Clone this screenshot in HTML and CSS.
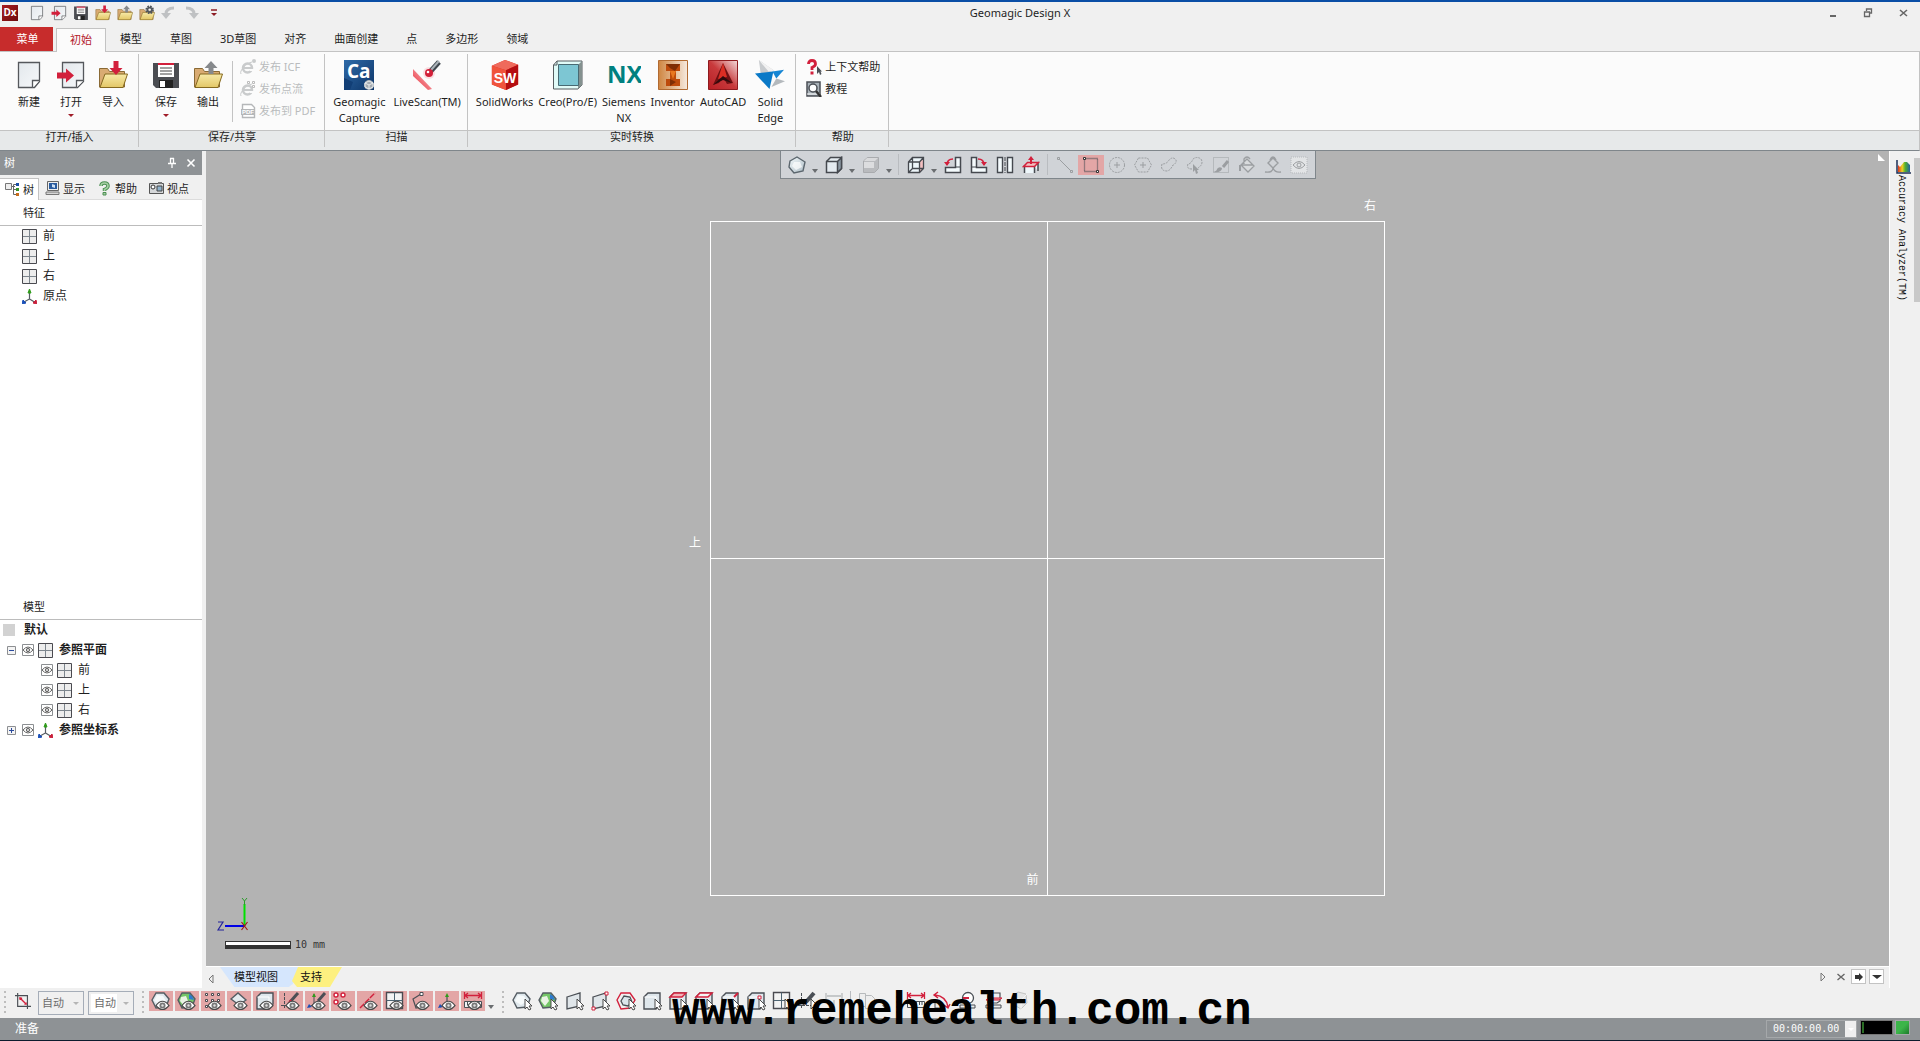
FILE: index.html
```html
<!DOCTYPE html>
<html lang="zh-CN">
<head>
<meta charset="utf-8">
<title>Geomagic Design X</title>
<link rel="stylesheet" href="styles.css">
</head>
<body>
<svg class="sprite" aria-hidden="true">
  <defs>
    <linearGradient id="paper" x1="0" y1="0" x2="1" y2="1"><stop offset="0" stop-color="#e3e8ec"/><stop offset="1" stop-color="#f6f8fa"/></linearGradient>
    <linearGradient id="gold" x1="0" y1="0" x2="0" y2="1"><stop offset="0" stop-color="#f7eaa8"/><stop offset="1" stop-color="#e3c766"/></linearGradient>
    <linearGradient id="steel" x1="0" y1="0" x2="1" y2="1"><stop offset="0" stop-color="#f4fafc"/><stop offset="1" stop-color="#aebdc6"/></linearGradient>
    <linearGradient id="navy" x1="0" y1="0" x2="1" y2="1"><stop offset="0" stop-color="#2e6aa8"/><stop offset="1" stop-color="#0d3568"/></linearGradient>
    <linearGradient id="orange" x1="0" y1="0" x2="1" y2="0"><stop offset="0" stop-color="#cf8540"/><stop offset="1" stop-color="#f6eadf"/></linearGradient>
    <linearGradient id="ruby" x1="1" y1="0" x2="0" y2="1"><stop offset="0" stop-color="#f3dada"/><stop offset=".5" stop-color="#c83a3c"/><stop offset="1" stop-color="#b81f25"/></linearGradient>
    <linearGradient id="rainbow" x1="0" y1="0" x2="1" y2="0"><stop offset="0" stop-color="#e03020"/><stop offset=".35" stop-color="#f0d020"/><stop offset=".6" stop-color="#50b030"/><stop offset="1" stop-color="#2060a0"/></linearGradient>
    <linearGradient id="beam" x1="0" y1="1" x2="1" y2="0"><stop offset="0" stop-color="#e8202c"/><stop offset="1" stop-color="#fbd6da"/></linearGradient>
  </defs>
  <symbol id="page" viewBox="0 0 30 30"><path d="M4.500 2.500h21v19l-5 6h-16z" fill="url(#paper)" stroke="#55585c" stroke-width="1.300"/><path d="M25.500 20.500h-7l0 7" fill="#fff" stroke="#55585c" stroke-width="1.300"/></symbol>
  <symbol id="open" viewBox="0 0 30 30"><path d="M6.500 2.500h21v19l-6 6h-15z" fill="url(#paper)" stroke="#55585c" stroke-width="1.300"/><path d="M27.500 20.500h-7v7" fill="#fff" stroke="#55585c" stroke-width="1.300"/><path d="M1 12.500h9V8.500l8 7-8 7v-4H1z" fill="#d2203c"/></symbol>
  <symbol id="folder" viewBox="0 0 30 30"><path d="M1.500 27V8.500h8l2 3h15V27z" fill="#d9ab72" stroke="#8a6a35"/><path d="M7 14h22.500L25 27.500H2z" fill="url(#gold)" stroke="#85691f"/></symbol>
  <symbol id="import" viewBox="0 0 30 30"><use href="#folder"/><path d="M15.500 1h5v7h4l-6.500 7L11.500 8h4z" fill="#d2203c"/></symbol>
  <symbol id="export" viewBox="0 0 30 30"><use href="#folder"/><path d="M15.500 14V8h-4L18 1l6.500 7h-4v6z" fill="#86898c"/></symbol>
  <symbol id="gearfolder" viewBox="0 0 30 30"><use href="#folder"/><circle cx="20" cy="9" r="6" fill="none" stroke="#50565c" stroke-width="4" stroke-dasharray="3 1.700"/><circle cx="20" cy="9" r="4" fill="none" stroke="#50565c" stroke-width="3"/></symbol>
  <symbol id="disk" viewBox="0 0 30 30"><path d="M2 3h26v25H5l-3-3z" fill="#4b4d52"/><path d="M7 4h16v13H7z" fill="#fff"/><path d="M7 3h16v2H7z" fill="#d2203c"/><path d="M9 8h12M9 11h12M9 14h12" stroke="#444"/><path d="M8 20h14v8H8z" fill="#222"/><path d="M9 21h5v6H9z" fill="#fff"/></symbol>
  <symbol id="undo" viewBox="0 0 16 16"><path d="M0 8h10l-5 6z" fill="#bfc1c3"/><path d="M5 9q0-6 8-6" fill="none" stroke="#bfc1c3" stroke-width="3"/></symbol>
  <symbol id="redo" viewBox="0 0 16 16"><path d="M16 8H6l5 6z" fill="#bfc1c3"/><path d="M11 9q0-6-8-6" fill="none" stroke="#bfc1c3" stroke-width="3"/></symbol>
  <symbol id="ie" viewBox="0 0 16 16"><circle cx="7.500" cy="9" r="4.500" fill="none" stroke="#c9cbcc" stroke-width="2.500"/><path d="M4 9h8" stroke="#c9cbcc" stroke-width="2"/><path d="M10 10h4v2h-4z" fill="#fbfbfb"/><path d="M1 15C-1 12 6 4 12 3" fill="none" stroke="#c9cbcc"/></symbol>
  <symbol id="icf" viewBox="0 0 16 16"><use href="#ie"/><circle cx="14" cy="2" r="2" fill="#c9cbcc"/></symbol>
  <symbol id="cloud" viewBox="0 0 16 16"><use href="#ie"/><path d="M7.500.500h2v2h-2zM12.500.500h2v2h-2zM12.500 4.500h2v2h-2z" fill="#fff" stroke="#bbb"/></symbol>
  <symbol id="livescan" viewBox="0 0 30 30"><path d="M1 9l19 20-4 1L1 16z" fill="url(#beam)"/><circle cx="17" cy="13" r="6" fill="#fad0d6" opacity=".7"/><path d="M17 13L27 2" stroke="#3f474e" stroke-width="5"/><path d="M19 10l8-9" stroke="#aab2b8" stroke-width="2"/><circle cx="17" cy="13" r="4" fill="#d21f38"/><circle cx="16" cy="12" r="1.300" fill="#fff"/></symbol>
  <symbol id="creo" viewBox="0 0 30 30"><path d="M.500 5L4 1h25v24l-4 4H.500z" fill="#e1fbf8" stroke="#565d60"/><path d="M25 5l4-4v24l-4 4z" fill="#84918f"/><path d="M5.500 4.500h20v21h-20z" fill="#7dc6d3" stroke="#486a73"/><path d="M.500 5H4M4 1v4" stroke="#565d60"/></symbol>
  <symbol id="inventor" viewBox="0 0 30 30"><path d="M.500.500h29v29H.500z" fill="url(#orange)" stroke="#b16a31"/><path d="M8 4h14v7h-4v8h4v7H8v-7h4v-8H8z" fill="#bd4a0b"/><path d="M8 4h14l-5 7-5-3zM12 19l6 3-6 4z" fill="#7f2e04"/><path d="M12 11h6l-3 8z" fill="#e87720"/></symbol>
  <symbol id="acad" viewBox="0 0 30 30"><path d="M.500.500h29v29H.500z" fill="url(#ruby)" stroke="#8e1a1e"/><path d="M15 3l10 20-6 1-4-7-4 6-6 2z" fill="#701013"/><path d="M15 3l4 14-9 2z" fill="#db2e24"/><path d="M5 25l10-9 9 7-9-3z" fill="#2f0b0d"/></symbol>
  <symbol id="edge" viewBox="0 0 31 31"><path d="M4 0l16 11-14 4z" fill="#c8cbce"/><path d="M4 0l16 11-6 1z" fill="#f2f2f2"/><path d="M0 14l19-2-4 18z" fill="#0a79c7"/><path d="M18 12l12-2-8 9z" fill="#1686d4"/><path d="M17 28l5-9 9 3z" fill="#b4b9bd"/></symbol>
  <symbol id="ctxhelp" viewBox="0 0 16 16"><path d="M2.500 5q0-3.500 3.500-3.500T9.500 5Q9.500 7 6 8.500V11" fill="none" stroke="#d2203c" stroke-width="2.800"/><path d="M4.500 12.500h3v3h-3z" fill="#d2203c"/><path d="M11 7v8l2-2 1 3 1.500-1-1-2.500H16z" fill="#4b4f55"/></symbol>
  <symbol id="tutorial" viewBox="0 0 16 16"><path d="M1 1h13v14H1z" fill="#aab3ba" stroke="#4b4f55" stroke-width="1.500"/><path d="M1 13h13" stroke="#fff"/><circle cx="7" cy="7" r="4" fill="#fff" stroke="#4b4f55" stroke-width="1.500"/><path d="M10 10l5 6" stroke="#333" stroke-width="2.500"/></symbol>

  <symbol id="poly" viewBox="0 0 18 18"><path d="M2 5l7-4 8 5-2 9-9 2-5-6z" fill="url(#steel)" stroke="#5b666e" stroke-width="1.400"/><path d="M6 6l6 0 2 5-6 3-4-4z" fill="#fff" opacity=".7"/></symbol>
  <symbol id="cube" viewBox="0 0 18 18"><path d="M1.500 5.500l4-4h11v11l-4 4h-11z" fill="#e4ebf0" stroke="#45494f" stroke-width="1.500"/><path d="M12.500 5.500l4-4v11l-4 4z" fill="#8b98a2" stroke="#45494f" stroke-width="1.500"/><path d="M1.500 5.500h11" stroke="#45494f" stroke-width="1.500"/></symbol>
  <symbol id="cubegray" viewBox="0 0 18 18"><path d="M1.500 5l4-3.500h11v11l-4 4h-11z" fill="#b9bbbe" stroke="#a9abae"/><path d="M2 6h10v6H2z" fill="#dcdddf"/><path d="M5 2h11l-3 3H2z" fill="#d9dadc"/></symbol>
  <symbol id="wirecube" viewBox="0 0 18 18"><path d="M1.500 6l4-4.500h11v11l-4 4h-11z" fill="#edf6fa"/><path d="M12.500 6l4-4.500v11l-4 4z" fill="#f3bfc0"/><path d="M1.500 6l4-4.500h11v11l-4 4h-11zM1.500 6h11v10.500M12.500 6l4-4.500M5.500 1.500v11h11M1.500 16.500l4-4" fill="none" stroke="#45494f" stroke-width="1.300"/></symbol>
  <symbol id="rotl" viewBox="0 0 18 18"><path d="M11.500 1.500h5v15h-15v-5h10z" fill="#f4fbfd" stroke="#45494f" stroke-width="1.500"/><path d="M11 11h5" stroke="#45494f"/><path d="M3 9q0-6 6-6" fill="none" stroke="#d2203c" stroke-width="1.600"/><path d="M0 6h6l-3 4z" fill="#d2203c"/></symbol>
  <symbol id="rotr" viewBox="0 0 18 18"><path d="M1.500 1.500h5v10h10v5h-15z" fill="#f4fbfd" stroke="#45494f" stroke-width="1.500"/><path d="M2 11h5" stroke="#45494f"/><path d="M8 3q6 0 6 6" fill="none" stroke="#d2203c" stroke-width="1.600"/><path d="M11 6h6l-3 4z" fill="#d2203c"/></symbol>
  <symbol id="mirror" viewBox="0 0 18 18"><path d="M1.500 1.500h5v15h-5zM11.500 1.500h5v15h-5z" fill="#f4fbfd" stroke="#45494f" stroke-width="1.400"/><path d="M9 1v16" stroke="#45494f" stroke-dasharray="4 1"/></symbol>
  <symbol id="extrude" viewBox="0 0 18 18"><path d="M2.500 17v-7h10v7M12 10l4-3v8" fill="#edf6fa" stroke="#45494f" stroke-width="1.500"/><path d="M1.500 10.500l4-4h11l-4 4z" fill="#f3bfc0" stroke="#d2203c" stroke-width="1.500"/><path d="M9 8V2" stroke="#d2203c" stroke-width="2"/><path d="M6 4l3-4 3 4z" fill="#d2203c"/></symbol>
  <symbol id="dline" viewBox="0 0 18 18"><path d="M3 3l12 12" stroke="#9b9ea1"/><path d="M1.500 1.500h2v2h-2zM14.500 14.500h2v2h-2z" fill="none" stroke="#9b9ea1"/></symbol>
  <symbol id="drect" viewBox="0 0 18 18"><path d="M2.500 2.500h13v13h-13z" fill="none" stroke="#454a50" stroke-width="1.300" stroke-dasharray="1 1"/><path d="M1.500 1.500h2v2h-2zM14.500 14.500h2v2h-2z" fill="#fff" stroke="#333"/></symbol>
  <symbol id="dcircle" viewBox="0 0 18 18"><circle cx="9" cy="9" r="7.500" fill="none" stroke="#9b9ea1" stroke-dasharray="2 1"/><path d="M9 6v6M6 9h6" stroke="#9b9ea1"/></symbol>
  <symbol id="dhex" viewBox="0 0 18 18"><path d="M4.500 2h9l4 7-4 7h-9l-4-7z" fill="none" stroke="#9b9ea1" stroke-dasharray="2 1"/><path d="M9 6v6M6 9h6" stroke="#9b9ea1"/></symbol>
  <symbol id="dfree" viewBox="0 0 18 18"><path d="M2 8q-2 7 5 7 4-1 5-5 5-3 4-6-3-4-7 0-2 4-7 4z" fill="none" stroke="#9b9ea1" stroke-dasharray="2 1"/></symbol>
  <symbol id="dpick" viewBox="0 0 18 18"><path d="M6 13q-6 0-4-5 3 0 5-5 4-3 8 0 3 5-3 9" fill="none" stroke="#9b9ea1" stroke-dasharray="2 1"/><path d="M7 8v8l2-2 1 4 2-1-1-3h2z" fill="#9b9ea1"/></symbol>
  <symbol id="dbrush" viewBox="0 0 18 18"><path d="M1.500 1.500h15v15h-15z" fill="none" stroke="#9b9ea1" stroke-dasharray="1 1"/><path d="M16 5l-5 6" stroke="#9b9ea1" stroke-width="3"/><path d="M1 16q4-1 4-3 2-3 5-1 0 5-9 4z" fill="#9b9ea1"/></symbol>
  <symbol id="dbucket" viewBox="0 0 18 18"><path d="M3 9l6-6 7 7-6 6zM6 8V3q3-4 6 0M3 9h12" fill="#d9dbdd" stroke="#9b9ea1" stroke-width="1.300"/><path d="M1 9v6h2V9z" fill="#9b9ea1"/></symbol>
  <symbol id="dextend" viewBox="0 0 18 18"><path d="M4 7l5-5 5 5-5 5zM6 4q3-6 6 0M1 16q8 1 8-4 2 5 8 4" fill="none" stroke="#9b9ea1" stroke-width="1.400"/></symbol>
  <symbol id="deye" viewBox="0 0 18 18"><path d="M1 1h16v16H1z" fill="#e2e4e6" stroke="#b6b9bc" stroke-dasharray="1 1"/><path d="M3 9q6-7 12 0-6 7-12 0z" fill="none" stroke="#9b9ea1"/><circle cx="9" cy="9" r="2" fill="none" stroke="#9b9ea1"/></symbol>

  <symbol id="plane" viewBox="0 0 15 15"><path d="M.500.500h14v14H.500z" fill="#ededed" stroke="#4a4a50"/><path d="M7.500 1v13M1 7.500h13" stroke="#7d868e"/></symbol>
  <symbol id="origin" viewBox="0 0 15 15"><path d="M7.500 3v7L2 13M7.500 10l5 3" fill="none" stroke="#555c62" stroke-width="1.200"/><path d="M6 4l1.500-4L9 4z" fill="#309c1c" stroke="#309c1c"/><path d="M0 15l1-4 3 3z" fill="#1b50b8" stroke="#1b50b8"/><path d="M15 15l-1-4-3 3z" fill="#c9203c" stroke="#c9203c"/></symbol>
  <symbol id="eyebox" viewBox="0 0 12 12"><path d="M.500.500h11v11H.500z" fill="#fff" stroke="#8c8f92"/><path d="M1 6q5-6 10 0-5 6-10 0z" fill="#fff" stroke="#666"/><circle cx="6" cy="6" r="1.700" fill="#ccc" stroke="#666"/></symbol>
  <symbol id="treeicon" viewBox="0 0 15 15"><path d="M.500 1.500h6v6h-6z" fill="#eee" stroke="#777"/><path d="M7 4.500h3M11 2.500H8.500v10H11M9 7.500h2" fill="none" stroke="#666"/><path d="M11 1h3v3h-3z" fill="#1d4fa8"/><path d="M11 6h3v3h-3z" fill="#38952a"/><path d="M11 11h3v3h-3z" fill="#c86d1c"/></symbol>
  <symbol id="display" viewBox="0 0 15 15"><path d="M2.500.500h11v9h-11z" fill="#eee" stroke="#666"/><path d="M4 2h8v6H4z" fill="#2a5c9f"/><path d="M7 3l3 1v3l-3-1z" fill="#cfe1f4"/><path d="M1 11h13v2.500H1z" fill="#d7d7d7" stroke="#777"/></symbol>
  <symbol id="help" viewBox="0 0 15 15"><path d="M4 5q0-3 3.500-3T11 5q0 2-3.500 3.500V10" fill="none" stroke="#4b8e52" stroke-width="3.500"/><path d="M4 5q0-3 3.500-3T11 5q0 2-3.500 3.500V10" fill="none" stroke="#a6d0a4" stroke-width="1.600"/><path d="M6 11.500h3v2.500H6z" fill="#a6d0a4" stroke="#4b8e52"/></symbol>
  <symbol id="camera" viewBox="0 0 15 15"><path d="M.500 2.500h14v10H.500z" fill="#d5d7d9" stroke="#555"/><path d="M9 1h4v2H9z" fill="#777"/><circle cx="4" cy="6" r="2" fill="#fff" stroke="#333"/><path d="M8 5h5v5H8z" fill="#8fb2cc" stroke="#444"/></symbol>
  <symbol id="accuracy" viewBox="0 0 15 14"><path d="M2 12V5l2 2 4-5h3l3 3v7z" fill="url(#rainbow)"/><path d="M1 0v13h14" fill="none" stroke="#1b2e54" stroke-width="1.500"/></symbol>

  <symbol id="eye" viewBox="0 0 24 20"><path d="M7 14.500q6.500-8.500 13 0-6.500 8-13 0z" fill="#fff" stroke="#4a4a4a" stroke-width="1.200"/><circle cx="13.500" cy="14.500" r="3" fill="#777"/><circle cx="13.500" cy="14.500" r="1.200" fill="#ddd"/></symbol>
  <symbol id="cursor" viewBox="0 0 24 20"><path d="M15 8v10l2-2 2 3 2-1-2-3h3z" fill="#fff" stroke="#4a4a4a"/></symbol>
  <symbol id="b-poly" viewBox="0 0 24 20"><path d="M3 9l4-7 8 0 5 6-3 8-10 1z" fill="#dfe8ed" stroke="#545c63" stroke-width="1.400"/><path d="M8 4l6 1 3 5-6 4-6-4z" fill="#f6fafb"/></symbol>
  <symbol id="b-region" viewBox="0 0 24 20"><path d="M3 9l4-7 8 0 5 6-3 8-10 1z" fill="#74c667" stroke="#545c63" stroke-width="1.400"/><path d="M6 6l5-1 2 5-4 5-4-5z" fill="#e9f4e4"/><path d="M14 3l3 2 2 4-5-1z" fill="#2c79cf"/></symbol>
  <symbol id="b-points" viewBox="0 0 24 20"><path d="M4.500 2.500h2v2h-2zM10.500 2.500h2v2h-2zM16.500 2.500h2v2h-2zM4.500 8.500h2v2h-2zM10.500 8.500h2v2h-2zM16.500 8.500h2v2h-2zM4.500 14.500h2v2h-2z" fill="#fff" stroke="#4a4a50"/></symbol>
  <symbol id="b-surface" viewBox="0 0 24 20"><path d="M4 8l7-6 8 7-7 5z" fill="#e4ecf0" stroke="#545c63" stroke-width="1.400"/></symbol>
  <symbol id="b-solid" viewBox="0 0 24 20"><path d="M4 6l4-4h12v11l-4 5H4z" fill="#dfe7ec" stroke="#4a4f55" stroke-width="1.400"/><path d="M4.500 6H16v11" fill="none" stroke="#fff"/></symbol>
  <symbol id="b-sketch" viewBox="0 0 24 20"><path d="M5.500 2v16M2 14.500h18" stroke="#4a4f55" stroke-dasharray="3 1"/><path d="M19 2l-8 9" stroke="#4a4f55" stroke-width="3"/><path d="M12 9l-3 4" stroke="#d2203c" stroke-width="2"/></symbol>
  <symbol id="b-pen" viewBox="0 0 24 20"><path d="M5.500 2v16M2 14.500h18" stroke="#4a4f55" stroke-dasharray="3 1"/><path d="M18 2l-8 9" stroke="#4a4f55" stroke-width="4"/><path d="M10 9l-3 5" stroke="#4a4f55"/></symbol>
  <symbol id="b-sketch3" viewBox="0 0 24 20"><path d="M9 3v10l-5 3M9 13h10" fill="none" stroke="#4a4f55"/><path d="M7 6l2-4 2 4z" fill="#309c1c"/><path d="M2 17l2-4 3 3z" fill="#1b50b8"/><path d="M20 2l-7 8" stroke="#4a4f55" stroke-width="3"/></symbol>
  <symbol id="b-pts" viewBox="0 0 24 20"><g fill="#fff" stroke="#d2203c" stroke-width="1.400"><circle cx="5" cy="4" r="2"/><circle cx="12" cy="4" r="2"/><circle cx="5" cy="11" r="2"/></g></symbol>
  <symbol id="b-line" viewBox="0 0 24 20"><path d="M3 17L18 2" stroke="#d2203c" stroke-width="1.400" stroke-dasharray="6 1"/></symbol>
  <symbol id="b-plane" viewBox="0 0 24 20"><path d="M3.500 1.500h16v16h-16z" fill="#f3f3f3" stroke="#4a4a50" stroke-width="1.400"/><path d="M11.500 1.500v16M3.500 9.500h16" stroke="#4e6472"/></symbol>
  <symbol id="b-curve" viewBox="0 0 24 20"><path d="M12 3L4 8l3 9 6-1" fill="none" stroke="#4a4f55" stroke-width="1.200"/><path d="M11 1.500h3v3h-3z" fill="#fff" stroke="#4a4f55"/></symbol>
  <symbol id="b-coord" viewBox="0 0 24 20"><path d="M12 5v9l-7 2M12 13l7 2" fill="none" stroke="#4a4f55" stroke-width="1.200"/><path d="M10 6l2-4 2 4z" fill="#309c1c"/><path d="M3 17l2-4 3 3z" fill="#1b50b8"/></symbol>
  <symbol id="b-dim" viewBox="0 0 24 20"><path d="M3.500 1v7M20.500 1v7M4 4.500h16M7 2L4 4.500 7 7M17 2l3 2.500L17 7" fill="none" stroke="#d2203c" stroke-width="1.300"/><path d="M3.500 10.500h17v6h-17z" fill="#f1f4f6" stroke="#4a4f55"/><path d="M6.500 11v3M9.500 11v3M12.500 11v3M15.500 11v3M18 11v3" stroke="#4a4f55"/></symbol>
  <symbol id="b-quad" viewBox="0 0 24 20"><path d="M5 6l13-4v13L5 18z" fill="#e0e6ea" stroke="#4a4f55" stroke-width="1.300"/></symbol>
  <symbol id="b-quadpt" viewBox="0 0 24 20"><use href="#b-quad"/><path d="M17 1h3v3h-3zM4 16h3v3H4z" fill="#fff" stroke="#d2203c"/></symbol>
  <symbol id="b-polyred" viewBox="0 0 24 20"><path d="M3 9l4-7 9 0 5 7-5 8-9 1z" fill="none" stroke="#d2203c" stroke-width="1.400"/><path d="M7 10l3-5 6 1 2 5-4 4-5-1z" fill="#dce6ec" stroke="#4a4f55" stroke-width="1.300"/></symbol>
  <symbol id="b-face" viewBox="0 0 24 20"><use href="#b-solid"/><path d="M4 6l4-4h12l-4 4z" fill="#f0b4b9" stroke="#d2203c" stroke-width="1.400"/></symbol>
  <symbol id="b-loop" viewBox="0 0 24 20"><use href="#b-solid"/><path d="M4 6l4-4h12l-4 4z" fill="#f5f5f5" stroke="#d2203c" stroke-width="1.500"/></symbol>
  <symbol id="b-edge" viewBox="0 0 24 20"><use href="#b-solid"/><path d="M16 6l4-4" stroke="#d2203c" stroke-width="2"/></symbol>
  <symbol id="b-vertex" viewBox="0 0 24 20"><use href="#b-solid"/><path d="M14 5h3v3h-3z" fill="#fff" stroke="#d2203c"/></symbol>
  <symbol id="b-crop" viewBox="0 0 18 18"><path d="M3 0v15h15M0 3h14v15" fill="none" stroke="#4a4f55" stroke-width="1.300"/><path d="M5 5l8 8" stroke="#d2203c" stroke-width="1.500"/><path d="M5 5h3v3H5zM10 13l3-3v3z" fill="#d2203c"/></symbol>
  <symbol id="b-dimgray" viewBox="0 0 24 20"><path d="M4 2v6M20 2v6M5 5h14M12 9v8" fill="none" stroke="#b7babc" stroke-width="1.300"/></symbol>
  <symbol id="b-copy" viewBox="0 0 24 20"><path d="M4.500 2.500h6v13h-6zM10.500 4.500h6l3 3v10h-9z" fill="#eee" stroke="#b7babc"/></symbol>
  <symbol id="b-angle" viewBox="0 0 24 20"><path d="M5 17V9q8 1 9 8z" fill="#e8ecef" stroke="#4a4f55"/><path d="M5 4q11 1 13 12M8 1L4 4l4 3M14 14l4 3 2-4" fill="none" stroke="#d2203c" stroke-width="1.400"/></symbol>
  <symbol id="b-radius" viewBox="0 0 24 20"><circle cx="12" cy="7" r="5.500" fill="#fff" stroke="#4a4f55" stroke-width="1.300"/><path d="M7 7h6" stroke="#d2203c" stroke-width="2"/><path d="M4 14h15v3H4z" fill="#eee" stroke="#4a4f55"/></symbol>
  <symbol id="b-section" viewBox="0 0 24 20"><path d="M6 5l3-3h9v8l-3 2H6z" fill="#eef2f4" stroke="#4a4f55" stroke-width="1.200"/><path d="M4 9l3-2h13l-3 2z" fill="#f0a0a8" stroke="#d2203c"/><path d="M4 14h15v3H4z" fill="#eee" stroke="#4a4f55"/></symbol>
  <symbol id="b-faded" viewBox="0 0 24 20"><path d="M5 5l5-4 8 2 1 9-6 6-7-4z" fill="#e6e6e6" stroke="#c4c4c4"/><path d="M5 5l8 4 6-6M13 9v9" fill="none" stroke="#f5f5f5"/></symbol>
</svg>

<header class="titlebar">
  <span class="logo">Dx</span>
  <div class="quick">
    <button aria-label="新建"><svg class="i16"><use href="#page"/></svg></button>
    <button aria-label="打开"><svg class="i16"><use href="#open"/></svg></button>
    <button aria-label="保存"><svg class="i16"><use href="#disk"/></svg></button>
    <button aria-label="导入"><svg class="i16"><use href="#import"/></svg></button>
    <button aria-label="输出"><svg class="i16"><use href="#export"/></svg></button>
    <button aria-label="设置"><svg class="i16"><use href="#gearfolder"/></svg></button>
    <button aria-label="撤销"><svg class="i16"><use href="#undo"/></svg></button>
    <button aria-label="重做"><svg class="i16"><use href="#redo"/></svg></button>
    <button class="quick-more" aria-label="自定义"><svg width="6" height="8" viewBox="0 0 6 8"><path d="M0 1h6" stroke="#8c1c24" stroke-width="1.500"/><path d="M0 4h6L3 7z" fill="#8c1c24"/></svg></button>
  </div>
  <h1 class="title">Geomagic Design X</h1>
  <div class="window-buttons">
    <button aria-label="最小化"><svg width="10" height="10"><path d="M2 8h6" stroke="#666" stroke-width="2"/></svg></button>
    <button aria-label="还原"><svg width="10" height="10"><path d="M3.500 3V1h5v4H7M1.500 4h5v4.500h-5z" fill="none" stroke="#666" stroke-width="1.300"/></svg></button>
    <button aria-label="关闭"><svg width="10" height="10"><path d="M2 2l7 6M9 2L2 8" stroke="#666" stroke-width="1.600"/></svg></button>
  </div>
</header>

<nav class="tabs">
  <button class="tab tab-menu">菜单</button>
  <button class="tab tab-active">初始</button>
  <button class="tab">模型</button>
  <button class="tab">草图</button>
  <button class="tab">3D草图</button>
  <button class="tab">对齐</button>
  <button class="tab">曲面创建</button>
  <button class="tab">点</button>
  <button class="tab">多边形</button>
  <button class="tab">领域</button>
</nav>

<section class="ribbon">
  <div class="group">
    <div class="group-body">
      <button class="big"><svg class="i30"><use href="#page"/></svg><span>新建</span></button>
      <button class="big"><svg class="i30"><use href="#open"/></svg><span>打开</span><i class="drop"></i></button>
      <button class="big"><svg class="i30"><use href="#import"/></svg><span>导入</span></button>
    </div>
    <div class="group-name">打开/插入</div>
  </div>
  <div class="group">
    <div class="group-body">
      <button class="big"><svg class="i30"><use href="#disk"/></svg><span>保存</span><i class="drop"></i></button>
      <button class="big"><svg class="i30"><use href="#export"/></svg><span>输出</span></button>
      <div class="stack stack-ruled">
        <button class="small" disabled><svg class="i16"><use href="#icf"/></svg>发布 ICF</button>
        <button class="small" disabled><svg class="i16"><use href="#cloud"/></svg>发布点流</button>
        <button class="small" disabled><svg class="i16" viewBox="0 0 16 16"><path d="M2.500 14.500V1.500h9l3 3v10z" fill="#fff" stroke="#b5b7b9" stroke-width="1.400"/><path d="M1 6h14v6H1z" fill="#b5b7b9"/><text x="2" y="11" class="pdf-text">PDF</text></svg>发布到 PDF</button>
      </div>
    </div>
    <div class="group-name">保存/共享</div>
  </div>
  <div class="group">
    <div class="group-body scan">
      <button class="big"><svg class="i30" viewBox="0 0 30 30"><path d="M0 0h30v30H0z" fill="url(#navy)"/><path d="M0 18l9 4-3 8H0z" fill="#123f76"/><text x="3" y="18" class="ca-text">Ca</text><circle cx="25" cy="25" r="5" fill="#a4abb1"/><path d="M21 23l4-2 4 2v4l-4 2-4-2zM21 23l4 2v4M25 25l4-2" fill="none" stroke="#e9ecee"/></svg><span>Geomagic<br>Capture</span></button>
      <button class="big"><svg class="i30"><use href="#livescan"/></svg><span>LiveScan(TM)</span></button>
    </div>
    <div class="group-name">扫描</div>
  </div>
  <div class="group">
    <div class="group-body transfer">
      <button class="big"><svg class="i30" viewBox="0 0 32 32"><path d="M2 6L16 0l14 5v21l-13 6L2 26z" fill="#dc2a22"/><path d="M2 6L16 0l14 5-13 6z" fill="#ef6a5c"/><path d="M17 11l13-6v21l-13 6z" fill="#b50e12"/><path d="M2 6l15 5v21L2 26z" fill="#f0533c"/><text x="4" y="25" class="sw-text">SW</text></svg><span>SolidWorks</span></button>
      <button class="big"><svg class="i30"><use href="#creo"/></svg><span>Creo(Pro/E)</span></button>
      <button class="big"><svg class="i30 wide" viewBox="0 0 34 30"><text x="0" y="23" class="nx-text">NX</text></svg><span>Siemens<br>NX</span></button>
      <button class="big"><svg class="i30"><use href="#inventor"/></svg><span>Inventor</span></button>
      <button class="big"><svg class="i30"><use href="#acad"/></svg><span>AutoCAD</span></button>
      <button class="big"><svg class="i30"><use href="#edge"/></svg><span>Solid<br>Edge</span></button>
    </div>
    <div class="group-name">实时转换</div>
  </div>
  <div class="group">
    <div class="group-body">
      <div class="stack">
        <button class="small"><svg class="i16"><use href="#ctxhelp"/></svg>上下文帮助</button>
        <button class="small"><svg class="i16"><use href="#tutorial"/></svg>教程</button>
      </div>
    </div>
    <div class="group-name">帮助</div>
  </div>
  <div class="group group-rest">
    <div class="group-body"></div>
    <div class="group-name"></div>
  </div>
</section>

<main class="workspace">
  <aside class="sidebar">
    <div class="panel-title">
      <span>树</span>
      <button aria-label="固定"><svg width="10" height="12"><path d="M3.500 1v5M6.500 1v5M3 1.500h4M1 6.500h8M5 7v4" fill="none" stroke="#fff" stroke-width="1.300"/></svg></button>
      <button aria-label="关闭"><svg width="10" height="10"><path d="M1.500 1.500l7 7M8.500 1.500l-7 7" stroke="#fff" stroke-width="1.600"/></svg></button>
    </div>
    <div class="panel-tabs">
      <button class="panel-tab panel-tab-active"><svg class="i15"><use href="#treeicon"/></svg>树</button>
      <button class="panel-tab"><svg class="i15"><use href="#display"/></svg>显示</button>
      <button class="panel-tab"><svg class="i15"><use href="#help"/></svg>帮助</button>
      <button class="panel-tab"><svg class="i15"><use href="#camera"/></svg>视点</button>
    </div>
    <section class="tree">
      <h2>特征</h2>
      <ul class="features">
        <li><svg class="i15"><use href="#plane"/></svg>前</li>
        <li><svg class="i15"><use href="#plane"/></svg>上</li>
        <li><svg class="i15"><use href="#plane"/></svg>右</li>
        <li><svg class="i15"><use href="#origin"/></svg>原点</li>
      </ul>
    </section>
    <section class="tree">
      <h2>模型</h2>
      <ul class="models">
        <li class="strong root"><i class="swatch"></i>默认</li>
        <li class="strong"><button class="toggle" aria-label="折叠"><svg width="9" height="9"><path d="M.500.500h8v8h-8z" fill="#f4f4f4" stroke="#8d8f92"/><path d="M2 4.500h5" stroke="#2a4a9c"/></svg></button><svg class="i12"><use href="#eyebox"/></svg><svg class="i15"><use href="#plane"/></svg>参照平面</li>
        <li class="child"><svg class="i12"><use href="#eyebox"/></svg><svg class="i15"><use href="#plane"/></svg>前</li>
        <li class="child"><svg class="i12"><use href="#eyebox"/></svg><svg class="i15"><use href="#plane"/></svg>上</li>
        <li class="child"><svg class="i12"><use href="#eyebox"/></svg><svg class="i15"><use href="#plane"/></svg>右</li>
        <li class="strong"><button class="toggle" aria-label="展开"><svg width="9" height="9"><path d="M.500.500h8v8h-8z" fill="#f4f4f4" stroke="#8d8f92"/><path d="M2 4.500h5M4.500 2v5" stroke="#2a4a9c"/></svg></button><svg class="i12"><use href="#eyebox"/></svg><svg class="i15"><use href="#origin"/></svg>参照坐标系</li>
      </ul>
    </section>
  </aside>

  <div class="center">
    <div class="viewport">
      <div class="floatbar">
        <button aria-label="多面体"><svg class="i18"><use href="#poly"/></svg></button><i class="more"></i>
        <button aria-label="着色"><svg class="i18"><use href="#cube"/></svg></button><i class="more"></i>
        <button aria-label="渲染" disabled><svg class="i18"><use href="#cubegray"/></svg></button><i class="more"></i>
        <i class="rule"></i>
        <button aria-label="视角"><svg class="i18"><use href="#wirecube"/></svg></button><i class="more"></i>
        <button aria-label="左转"><svg class="i18"><use href="#rotl"/></svg></button>
        <button aria-label="右转"><svg class="i18"><use href="#rotr"/></svg></button>
        <button aria-label="翻转"><svg class="i18"><use href="#mirror"/></svg></button>
        <button aria-label="法向"><svg class="i18"><use href="#extrude"/></svg></button>
        <i class="rule"></i>
        <button aria-label="直线选择" disabled><svg class="i18"><use href="#dline"/></svg></button>
        <button aria-label="矩形选择" class="on"><svg class="i18"><use href="#drect"/></svg></button>
        <button aria-label="圆选择" disabled><svg class="i18"><use href="#dcircle"/></svg></button>
        <button aria-label="多边形选择" disabled><svg class="i18"><use href="#dhex"/></svg></button>
        <button aria-label="自由选择" disabled><svg class="i18"><use href="#dfree"/></svg></button>
        <button aria-label="套索" disabled><svg class="i18"><use href="#dpick"/></svg></button>
        <button aria-label="画笔" disabled><svg class="i18"><use href="#dbrush"/></svg></button>
        <button aria-label="填充" disabled><svg class="i18"><use href="#dbucket"/></svg></button>
        <button aria-label="延伸" disabled><svg class="i18"><use href="#dextend"/></svg></button>
        <button aria-label="可见" disabled><svg class="i18"><use href="#deye"/></svg></button>
      </div>
      <i class="corner"></i>
      <div class="planes">
        <span class="plane-name name-right">右</span>
        <span class="plane-name name-top">上</span>
        <span class="plane-name name-front">前</span>
      </div>
      <div class="axes">
        <svg width="32" height="34" viewBox="0 0 32 34"><path d="M27.500 7v22" stroke="#00e000" stroke-width="2"/><path d="M8 29h19" stroke="#0000e6" stroke-width="2"/><path d="M25 1l2.500 3L30 1M27.500 4v4" fill="none" stroke="#2a9c2a"/><path d="M1 25h5l-5 8h6" fill="none" stroke="#23239c" stroke-width="1.200"/><path d="M24.500 25l6 8M30.500 25l-6 8" stroke="#a01818" stroke-width="1.200"/></svg>
        <div class="scale"><i class="scale-bar"></i><span>10 mm</span></div>
      </div>
    </div>
    <div class="viewtabs">
      <button class="nav" aria-label="上一个"><svg width="6" height="10"><path d="M5 1v8L1 5z" fill="none" stroke="#777"/></svg></button>
      <button class="viewtab viewtab-model">模型视图</button>
      <button class="viewtab viewtab-support">支持</button>
      <div class="viewtools">
        <button aria-label="下一个"><svg width="6" height="10"><path d="M1 1v8l4-4z" fill="none" stroke="#777"/></svg></button>
        <button aria-label="关闭"><svg width="10" height="8"><path d="M1.500 1l7 6M8.500 1l-7 6" stroke="#666" stroke-width="1.400"/></svg></button>
        <button class="boxed" aria-label="移动"><svg width="10" height="10"><path d="M1 3h4V1l4 4-4 4V7H1z" fill="#333"/></svg></button>
        <button class="boxed" aria-label="列表"><svg width="10" height="6"><path d="M0 1h10L5 5z" fill="#333"/></svg></button>
      </div>
    </div>
  </div>

  <aside class="dock">
    <button class="dock-tab"><svg width="15" height="14"><use href="#accuracy"/></svg><span>Accuracy Analyzer(TM)</span></button>
    <i class="dock-edge"></i>
  </aside>
</main>

<section class="toolbar">
  <i class="grip"></i>
  <button aria-label="过滤" class="crop"><svg class="i16"><use href="#b-crop"/></svg></button>
  <label class="combo"><select disabled aria-label="宽度"><option>自动</option></select></label>
  <label class="combo combo-white"><select disabled aria-label="高度"><option>自动</option></select></label>
  <i class="grip"></i>
  <div class="toggles">
    <button aria-label="面片"><svg><use href="#b-poly"/><use href="#eye"/></svg></button>
    <button aria-label="领域"><svg><use href="#b-region"/><use href="#eye"/></svg></button>
    <button aria-label="点云"><svg><use href="#b-points"/><use href="#eye"/></svg></button>
    <button aria-label="曲面"><svg><use href="#b-surface"/><use href="#eye"/></svg></button>
    <button aria-label="实体"><svg><use href="#b-solid"/><use href="#eye"/></svg></button>
    <button aria-label="草图"><svg><use href="#b-sketch"/><use href="#eye"/></svg></button>
    <button aria-label="3D草图"><svg><use href="#b-sketch3"/><use href="#eye"/></svg></button>
    <button aria-label="参照点"><svg><use href="#b-pts"/><use href="#eye"/></svg></button>
    <button aria-label="参照线"><svg><use href="#b-line"/><use href="#eye"/></svg></button>
    <button aria-label="参照平面"><svg><use href="#b-plane"/><use href="#eye"/></svg></button>
    <button aria-label="参照曲线"><svg><use href="#b-curve"/><use href="#eye"/></svg></button>
    <button aria-label="坐标系"><svg><use href="#b-coord"/><use href="#eye"/></svg></button>
    <button aria-label="测量"><svg><use href="#b-dim"/><use href="#eye"/></svg></button>
  </div>
  <i class="more"></i>
  <i class="grip"></i>
  <div class="pickers">
    <button aria-label="选面片"><svg><use href="#b-poly"/><use href="#cursor"/></svg></button>
    <button aria-label="选领域"><svg><use href="#b-region"/><use href="#cursor"/></svg></button>
    <button aria-label="选单元面"><svg><use href="#b-quad"/><use href="#cursor"/></svg></button>
    <button aria-label="选顶点"><svg><use href="#b-quadpt"/><use href="#cursor"/></svg></button>
    <button aria-label="选境界"><svg><use href="#b-polyred"/><use href="#cursor"/></svg></button>
    <button aria-label="选体"><svg><use href="#b-solid"/><use href="#cursor"/></svg></button>
    <button aria-label="选面"><svg><use href="#b-face"/><use href="#cursor"/></svg></button>
    <button aria-label="选环"><svg><use href="#b-loop"/><use href="#cursor"/></svg></button>
    <button aria-label="选边"><svg><use href="#b-edge"/><use href="#cursor"/></svg></button>
    <button aria-label="选点"><svg><use href="#b-vertex"/><use href="#cursor"/></svg></button>
    <button aria-label="选平面"><svg><use href="#b-plane"/><use href="#cursor"/></svg></button>
    <button aria-label="选草图"><svg><use href="#b-pen"/><use href="#cursor"/></svg></button>
    <button aria-label="选尺寸" disabled><svg><use href="#b-dimgray"/></svg></button>
  </div>
  <i class="rule"></i>
  <div class="pickers"><button aria-label="复制" disabled><svg><use href="#b-copy"/></svg></button></div>
  <i class="more"></i>
  <i class="grip"></i>
  <div class="pickers">
    <button aria-label="距离"><svg><use href="#b-dim"/></svg></button>
    <button aria-label="角度"><svg><use href="#b-angle"/></svg></button>
    <button aria-label="半径"><svg><use href="#b-radius"/></svg></button>
    <button aria-label="断面"><svg><use href="#b-section"/></svg></button>
    <button aria-label="面片偏差" disabled><svg><use href="#b-faded"/></svg></button>
  </div>
</section>

<footer class="status">
  <span>准备</span>
  <div class="timer"><input type="text" value="00:00:00.00" readonly aria-label="时间"><button aria-label="时间选项"><i></i></button></div>
  <i class="meter"></i>
  <i class="lamp"></i>
</footer>
<div class="watermark">www.remehealth.com.cn</div>
</body>
</html>
```
FILE: styles.css
```css
* { box-sizing: border-box; }

body {
  margin: 0;
  height: 100vh;
  display: flex;
  flex-direction: column;
  position: relative;
  background: #f0f0f0;
  border-top: 2px solid #0a4ea6;
  border-bottom: 1px solid #0d1c2e;
  color: #1e1e1e;
  font: 11px/16px "Noto Sans", "Noto Sans CJK SC", sans-serif;
}

button {
  margin: 0;
  padding: 0;
  border: 0;
  background: none;
  color: inherit;
  font: inherit;
  white-space: nowrap;
}

svg { display: block; flex: none; }
.sprite { position: absolute; width: 0; height: 0; }
.i12 { width: 12px; height: 12px; }
.i15 { width: 15px; height: 15px; }
.i16 { width: 16px; height: 16px; }
.i18 { width: 18px; height: 18px; }
.i30 { width: 30px; height: 30px; }
.wide { width: 34px; }

.ca-text { font: bold 19px "Open Sans", sans-serif; fill: #fff; }
.sw-text { font: bold 15px "Liberation Sans", sans-serif; fill: #fff; }
.nx-text { font: bold 24px "Open Sans", sans-serif; fill: #008080; }
.pdf-text { font: bold 6px "Liberation Sans", sans-serif; fill: #fff; }

/* Title bar */
.titlebar { display: flex; flex: none; align-items: center; height: 25px; padding: 0 0 3px 2px; }
.logo {
  width: 16px;
  height: 16px;
  background: linear-gradient(135deg, #a81c1e, #6e0b0f);
  color: #fff;
  font: bold 10px/15px "Open Sans", sans-serif;
  text-align: center;
}
.quick { display: flex; align-items: center; gap: 6px; padding-left: 11px; }
.quick-more { padding: 0 8px 0 6px; }
.title { flex: 1; margin: 0; font-size: 11px; font-weight: normal; text-align: center; }
.window-buttons { display: flex; }
.window-buttons button { display: grid; place-items: center; width: 35px; height: 22px; }

/* Ribbon tabs */
.tabs { display: flex; flex: none; align-items: flex-end; height: 24px; }
.tab { height: 24px; padding: 0 14px; }
.tab-menu { width: 53px; margin-right: 3px; padding: 0 14px 0 16px; background: #c72c2c; color: #fff; }
.tab-active {
  margin-bottom: -1px;
  padding: 0 13px 2px;
  border: 1px solid #c3c3c3;
  border-bottom: 0;
  background: #fbfbfb;
  color: #b3202c;
  position: relative;
}

/* Ribbon */
.ribbon {
  display: flex;
  flex: none;
  height: 100px;
  border: 1px solid #c3c3c3;
  border-width: 1px 1px 1px 0;
  border-bottom-color: #7f868b;
  background: #fbfbfb;
}
.group { display: flex; flex-direction: column; position: relative; }
.group::after { content: ""; position: absolute; top: 2px; right: 0; bottom: 3px; width: 1px; background: #c3c3c3; }
.group-rest { flex: 1; }
.group-rest::after { display: none; }
.group-body { display: flex; flex: 1; padding: 4px 5px 0 6px; border-bottom: 1px solid #c3c3c3; }
.group:first-child .group-body { padding-left: 8px; }
.group-name { height: 19px; background: #e7e9ea; line-height: 12px; text-align: center; }
.big { display: flex; flex-direction: column; align-items: center; min-width: 42px; padding: 4px 2px 0; }
.big span { margin-top: 4px; line-height: 16px; }
.scan { gap: 4px; }
.transfer { gap: 1px; }
.drop { margin-top: 4px; border: 3px solid transparent; border-top-color: #a01c28; border-bottom: 0; }
.stack { padding: 0 4px; }
.stack-ruled { margin: 5px 0 8px 3px; padding: 0 5px 0 7px; border-left: 1px solid #c3c3c3; }
.stack-ruled .small:first-child { margin-top: -5px; }
.small { display: flex; align-items: center; gap: 3px; height: 22px; }
.small:disabled { color: #b9bbbd; }

/* Workspace */
.workspace { display: flex; flex: 1; min-height: 0; }
.sidebar { display: flex; flex-direction: column; width: 202px; margin-right: 4px; background: #fff; }
.panel-title { display: flex; align-items: center; gap: 9px; height: 24px; padding: 0 6px 0 4px; background: #8e9295; color: #fff; }
.panel-title span { flex: 1; }
.panel-tabs { display: flex; align-items: flex-end; height: 25px; border-bottom: 1px solid #dcdcdc; background: #f0f0f0; }
.panel-tab { display: flex; align-items: center; gap: 3px; height: 21px; padding: 0 6px; }
.panel-tab-active { height: 22px; margin-bottom: -1px; padding: 0 4px 0 5px; border: 1px solid #c3c3c3; border-width: 1px 1px 0 0; background: #fff; }
.tree { display: flex; flex-direction: column; flex: 1; }
.tree h2 { margin: 0; height: 26px; padding-left: 23px; border-bottom: 1px solid #bcbcbc; font-size: 11px; font-weight: normal; line-height: 25px; }
.tree ul { margin: 0; padding: 0; list-style: none; font-size: 12px; }
.tree li { display: flex; align-items: center; height: 20px; gap: 6px; }
.features li { padding-left: 22px; }
.models li { padding-left: 7px; }
.models .i12 { margin-right: -2px; }
.models .root { padding-left: 3px; gap: 9px; }
.models .child { padding-left: 41px; }
.strong { font-weight: bold; }
.swatch { width: 12px; height: 12px; background: #d2d2d2; }

.center { display: flex; flex-direction: column; flex: 1; min-width: 0; }
.viewport { display: grid; place-items: center; flex: 1; min-height: 0; position: relative; background: #b3b3b3; }
.planes {
  position: relative;
  height: calc(100% - 140px);
  aspect-ratio: 1;
  border: 1px solid #fff;
  background:
    linear-gradient(#fff, #fff) center / 1px 100% no-repeat,
    linear-gradient(#fff, #fff) center / 100% 1px no-repeat;
}
.plane-name { position: absolute; color: #fff; font-size: 12px; }
.name-right { right: 8px; top: -24px; }
.name-top { left: -22px; top: calc(50% - 24px); }
.name-front { right: calc(50% + 9px); bottom: 7px; }
.corner { position: absolute; right: 4px; top: 3px; border: solid transparent; border-width: 7px 0 0 7px; border-left-color: #fff; }
.axes { position: absolute; left: 11px; bottom: 13px; }
.scale { display: flex; align-items: center; gap: 4px; margin: 6px 0 0 8px; font: 10px/16px "DejaVu Sans Mono", monospace; color: #333; }
.scale-bar { width: 66px; height: 8px; border: 1px solid #333; background: linear-gradient(#fff 50%, #333 50%); }

.floatbar { display: flex; align-items: center; position: absolute; top: -1px; left: 574px; height: 29px; padding: 0 3px; border: 1px solid #7f868b; background: #d0d3d7; }
.floatbar button { display: grid; place-items: center; width: 26px; height: 20px; }
.floatbar .on { background: #e3a6a6; }
.more { width: 11px; padding: 12px 0 0 2px; }
.more::before { content: ""; display: block; width: 0; border: 3px solid transparent; border-top: 4px solid #6a6d70; border-bottom: 0; }
.rule { width: 1px; height: 21px; margin: 0 4px 0 3px; background: #b9bcc0; }

.viewtabs { display: flex; height: 22px; border-top: 1px solid #fff; }
.nav { padding: 2px 0 0 2px; width: 14px; }
.viewtab { height: 20px; color: #111; }
.viewtab-model { width: 80px; padding-right: 8px; background: #d5e6fd; clip-path: polygon(0 0, 100% 0, 91% 85%, 86% 100%, 18% 100%); }
.viewtab-support { width: 50px; margin-left: -8px; padding-right: 12px; background: #fdf080; clip-path: polygon(12% 0, 100% 0, 76% 100%, 10% 100%, 0 70%); }
.viewtools { display: flex; align-items: center; gap: 3px; margin-left: auto; padding: 0 5px 2px 0; }
.viewtools button { display: grid; place-items: center; width: 15px; height: 15px; }
.viewtools .boxed { border: 1px solid #c3c3c3; background: #fff; }

.dock { display: flex; align-items: flex-start; justify-content: space-between; width: 31px; border-left: 1px solid #fff; }
.dock-tab { display: flex; flex-direction: column; align-items: flex-start; gap: 1px; padding: 9px 0 0 6px; }
.dock-tab span { writing-mode: vertical-rl; font: 10px/10px "Liberation Mono", monospace; color: #111; }
.dock-edge { width: 6px; height: 144px; margin-top: 7px; background: #c8c8c8; }

/* Bottom toolbar */
.toolbar { display: flex; flex: none; align-items: flex-start; height: 30px; padding: 3px 4px 0; }
.toolbar .grip { width: 2px; height: 22px; background: repeating-linear-gradient(#bdbdbd 0 2px, transparent 2px 5px); }
.crop { margin: 2px 7px 0 9px; }
.combo { position: relative; width: 46px; height: 24px; margin-right: 4px; }
.combo select {
  width: 100%;
  height: 100%;
  padding: 0 3px;
  appearance: none;
  border: 1px solid #a5adb8;
  border-radius: 0;
  background: #f0f0f0;
  color: #6d6d6d;
  font: inherit;
  opacity: 1;
}
.combo-white { margin-right: 8px; }
.combo-white select { padding-left: 5px; background: linear-gradient(#fff, #fff) 2px 2px / 26px 18px no-repeat #f0f0f0; }
.combo::after { content: ""; position: absolute; right: 5px; top: 11px; border: 3px solid transparent; border-top-color: #b5b5b5; border-bottom: 0; }
.toggles { display: flex; gap: 2px; margin-left: 5px; }
.toggles button { width: 24px; height: 20px; background: #e3a6a6; }
.toggles svg, .pickers svg { width: 24px; height: 20px; }
.pickers { display: flex; gap: 2px; }
.toolbar .more { width: 17px; padding: 14px 0 0 3px; }
.toolbar .grip + .pickers { margin-left: 6px; }
.toolbar .rule { margin: 0 4px; }

/* Status bar */
.status { display: flex; flex: none; align-items: center; height: 22px; padding: 0 10px 0 15px; background: #8e9295; color: #fff; }
.status > span { flex: 1; font-size: 12px; }
.timer { display: flex; height: 18px; border: 1px solid #a5a8aa; }
.timer input { width: 78px; padding: 0 6px; border: 0; background: none; color: #fff; font: 10px/16px "DejaVu Sans Mono", monospace; }
.timer button { width: 11px; background: #efefef; }
.timer button i { display: block; width: 0; margin: 0 auto; border: 3px solid transparent; border-top-color: #fff; border-bottom: 0; }
.meter { width: 33px; height: 15px; margin: 0 2px 3px 3px; border: 1px solid #777; background: linear-gradient(#2a6c24, #2a6c24) 1px 1px / 2px 11px no-repeat #000; }
.lamp { width: 15px; height: 15px; margin-bottom: 3px; border: 1px solid #a5a8aa; background: linear-gradient(135deg, #3cb54a 50%, #1d7a2b); }

.watermark { position: absolute; left: 35%; bottom: 2px; color: #000; font: bold 46px/52px "Liberation Mono", monospace; pointer-events: none; }
```
